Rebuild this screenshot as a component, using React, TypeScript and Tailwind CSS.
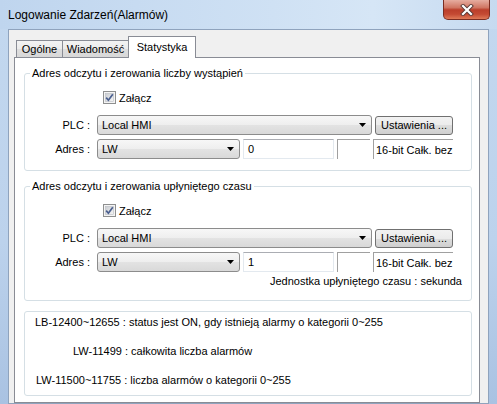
import React from 'react';

function CloseButton() {
  return (
    <div className="w-[47px] h-[20px] rounded-b-[5px] border border-t-0 border-[#7a2d22] bg-[linear-gradient(#e6ada0,#d07663_40%,#bb3f2b_52%,#c44a33_75%,#df7a58)] flex items-center justify-center">
      <svg width="14" height="12" viewBox="0 0 14 12">
        <path d="M3 2 L11 10 M11 2 L3 10" stroke="#5a3a36" strokeWidth="4" strokeLinecap="square" />
        <path d="M3 2 L11 10 M11 2 L3 10" stroke="#ffffff" strokeWidth="2.2" strokeLinecap="square" />
      </svg>
    </div>
  );
}

function Checkbox({ label }: { label: string }) {
  return (
    <div className="flex items-center h-[13px] pl-[78px] gap-[3px]">
      <svg width="13" height="13" viewBox="0 0 13 13">
        <defs>
          <linearGradient id="cbg" x1="0" y1="0" x2="1" y2="1">
            <stop offset="0" stopColor="#c9ccd1" />
            <stop offset="1" stopColor="#f6f6f6" />
          </linearGradient>
        </defs>
        <rect x="0.5" y="0.5" width="12" height="12" fill="#f4f4f4" stroke="#8e8f8f" />
        <rect x="2.5" y="2.5" width="8" height="8" fill="url(#cbg)" stroke="#b9bdc3" strokeWidth="0.6" />
        <path d="M3.2 6.6 L5.4 9.2 L9.8 3.2" stroke="#4a5f8f" strokeWidth="1.7" fill="none" />
      </svg>
      <span className="leading-[14px]">{label}</span>
    </div>
  );
}

function Combo({ value, className }: { value: string; className: string }) {
  return (
    <div
      className={
        'h-[20px] flex items-center justify-between pl-[4px] pr-[5px] rounded-[3px] border border-[#8c8c8c] bg-[linear-gradient(#f7f7f7,#eeeeee_50%,#e3e3e3_50%,#d9d9d9)] ' +
        className
      }
    >
      <span className="leading-[14px]">{value}</span>
      <svg width="7" height="4" viewBox="0 0 7 4">
        <path d="M0 0 H7 L3.5 4 Z" fill="#000" />
      </svg>
    </div>
  );
}

function FieldRow({ label, children }: { label: string; children: React.ReactNode }) {
  return (
    <div className="flex items-center h-[20px]">
      <div className="w-[65px] text-right leading-[14px]">{label}</div>
      <div className="flex items-center ml-[7px]">{children}</div>
    </div>
  );
}

function AddressGroup({ title, value, footer }: { title: string; value: string; footer?: string }) {
  return (
    <fieldset className="border border-[#d5dfe5] rounded-[3px] flex flex-col">
      <legend className="ml-[5px] px-[2px] leading-[14px]">{title}</legend>
      <div className="mt-[11px]">
        <Checkbox label="Załącz" />
      </div>
      <div className="mt-[11px]">
        <FieldRow label="PLC :">
          <Combo value="Local HMI" className="w-[275px]" />
          <div className="ml-[3px] w-[78px] h-[19px] flex items-center pl-[5px] rounded-[3px] border border-[#707070] bg-[linear-gradient(#f2f2f2,#ebebeb_50%,#dddddd_50%,#cfcfcf)] leading-[14px]">
            Ustawienia ...
          </div>
        </FieldRow>
      </div>
      <div className="mt-[4px]">
        <FieldRow label="Adres :">
          <Combo value="LW" className="w-[143px]" />
          <div className="ml-[3px] w-[91px] h-[20px] flex items-center pl-[4px] border border-[#e3e9ef] border-t-[#abadb3] bg-white leading-[14px]">
            {value}
          </div>
          <div className="ml-[3px] w-[33px] h-[20px] border-l border-t border-[#a0a0a0]" />
          <div className="ml-[3px] w-[80px] h-[20px] flex items-center pl-[2px] border-l border-t border-[#a0a0a0] leading-[14px]">
            16-bit Całk. bez
          </div>
        </FieldRow>
      </div>
      {footer ? (
        <div className="mt-[2px] pr-[9px] pb-[12px] text-right leading-[14px]">{footer}</div>
      ) : (
        <div className="h-[11px]" />
      )}
    </fieldset>
  );
}

export default function App() {
  return (
    <div className="w-[497px] h-[404px] overflow-hidden flex flex-col bg-[linear-gradient(#c3d8ef,#bcd2ec_60%,#a9c2e2)] text-black text-[11px] font-['Liberation_Sans',Arial,sans-serif]">
      {/* title bar */}
      <div className="h-[29px] shrink-0 flex items-start justify-between bg-[linear-gradient(to_right,#bfd5ee,#cfe1f4_55%,#d6e6f6_75%,#c6daf0)]">
        <div className="h-[29px] flex items-center pl-[8px] text-[12px] text-black">Logowanie Zdarzeń(Alarmów)</div>
        <div className="mr-[7px]">
          <CloseButton />
        </div>
      </div>

      {/* client area */}
      <div className="flex-1 mx-[8px] border border-[#8fa3bd] bg-[#f0f0f0] pt-[6px] pl-[5px] pr-[8px] flex flex-col">
        {/* tabs */}
        <div className="h-[21px] flex items-end pl-[2px]">
          <div className="w-[47px] h-[17px] border border-b-0 border-[#898c95] bg-[linear-gradient(#f3f3f3,#ebebeb_50%,#dedede_50%,#d8d8d8)] flex items-center justify-center leading-[14px]">
            Ogólne
          </div>
          <div className="-ml-px w-[67px] h-[17px] border border-b-0 border-[#898c95] bg-[linear-gradient(#f3f3f3,#ebebeb_50%,#dedede_50%,#d8d8d8)] flex items-center justify-center leading-[14px]">
            Wiadomość
          </div>
          <div className="relative z-10 -ml-px -mb-px w-[68px] h-[22px] border border-b-0 border-[#898c95] bg-white flex items-start justify-center pt-[3px] leading-[14px]">
            Statystyka
          </div>
        </div>

        {/* tab panel */}
        <div className="flex-1 border border-[#898c95] bg-white pl-[9px] pr-[7px] pt-[8px] flex flex-col">
          <AddressGroup title="Adres odczytu i zerowania liczby wystąpień" value="0" />
          <div className="mt-[8px]">
            <AddressGroup
              title="Adres odczytu i zerowania upłyniętego czasu"
              value="1"
              footer="Jednostka upłyniętego czasu : sekunda"
            />
          </div>
          <div className="mt-[10px] border border-[#d5dfe5] rounded-[3px] pt-[3px] pb-[8px] flex flex-col gap-[15px] leading-[14px]">
            <div className="ml-[10px]">LB-12400~12655 : status jest ON, gdy istnieją alarmy o kategorii 0~255</div>
            <div className="ml-[48px]">LW-11499 : całkowita liczba alarmów</div>
            <div className="ml-[11px]">LW-11500~11755 : liczba alarmów o kategorii 0~255</div>
          </div>
        </div>
      </div>
    </div>
  );
}
